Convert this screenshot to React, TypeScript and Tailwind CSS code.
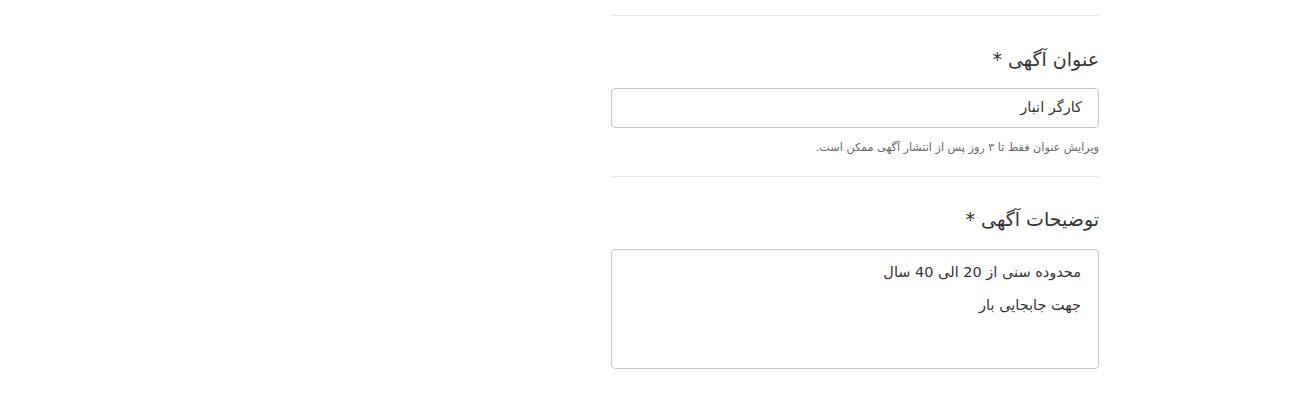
export default function App() {
  return (
    <div
      dir="rtl"
      className="w-[1306px] h-[404px] bg-white flex justify-start pr-[207px]"
      style={{ fontFamily: '"DejaVu Sans", sans-serif' }}
    >
      <div className="w-[488px] flex flex-col text-[#333]">
        <div className="mt-[15px] h-px bg-[#e6e6e6]" />

        {/* title field */}
        <div className="flex flex-col">
          <label className="mt-[29px] text-[19px] leading-[28px]">عنوان آگهی *</label>
          <div className="mt-[15px] h-[40px] border border-[#c8c8c8] rounded-[4px] flex items-center px-[16px] text-[14.5px]">
            کارگر انبار
          </div>
          <p className="mt-[11px] text-[11.2px] leading-[18px] text-[#666]">
            ویرایش عنوان فقط تا ۳ روز پس از انتشار آگهی ممکن است.
          </p>
        </div>

        <div className="mt-[19px] h-px bg-[#e6e6e6]" />

        {/* description field */}
        <div className="flex flex-col">
          <label className="mt-[28px] text-[19px] leading-[28px]">توضیحات آگهی *</label>
          <div className="mt-[16px] h-[120px] border border-[#c8c8c8] rounded-[4px] px-[17px] pt-[6px] text-[14.5px] leading-[33px]">
            <div>محدوده سنی از 20 الی 40 سال</div>
            <div>جهت جابجایی بار</div>
          </div>
        </div>
      </div>
    </div>
  );
}
